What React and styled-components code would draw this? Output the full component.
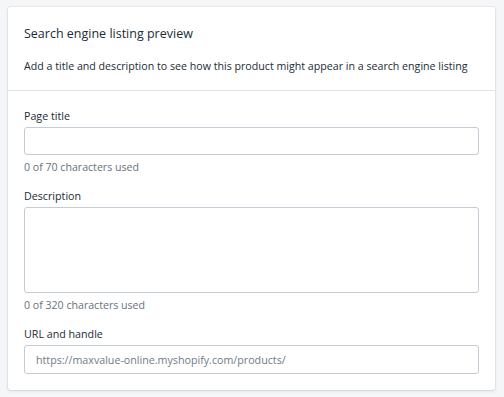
import React from 'react';
import styled, { createGlobalStyle } from 'styled-components';

const GlobalStyle = createGlobalStyle`
	* {
		box-sizing: border-box;
	}
	body {
		margin: 0;
		background-color: #f4f6f8;
		font-family: 'Open Sans', 'Noto Sans', sans-serif;
		color: #212b36;
	}
`;

const Page = styled.div`
	padding: 7px 9px 8px 8px;
`;

const Card = styled.div`
	background-color: #ffffff;
	border-radius: 3px;
	box-shadow: 0 0 0 1px rgba(63, 63, 68, 0.05), 0 1px 3px 0 rgba(63, 63, 68, 0.15);
`;

const Section = styled.div`
	padding: ${(props) => props.padding};
	& + & {
		border-top: 1px solid #dfe3e8;
	}
`;

const Title = styled.h2`
	margin: 0;
	font-size: 12.5px;
	font-weight: 400;
	line-height: 16px;
`;

const Subtitle = styled.p`
	margin: 16px 0 0;
	font-size: 10.65px;
	line-height: 16px;
	white-space: nowrap;
`;

const Field = styled.div`
	display: flex;
	flex-direction: column;
	& + & {
		margin-top: 13px;
	}
`;

const Label = styled.label`
	font-size: 10.7px;
	line-height: 16px;
	margin-bottom: 3px;
`;

const TextInput = styled.input`
	height: ${(props) => props.height || '28px'};
	width: 100%;
	border: 1px solid #c4cdd5;
	border-radius: 3px;
	padding: 0 11px;
	font-family: inherit;
	font-size: 10.7px;
	color: #212b36;
	background: #ffffff;
	outline: none;
	&::placeholder {
		color: #6f7b87;
	}
`;

const TextArea = styled.textarea`
	height: 86px;
	width: 100%;
	border: 1px solid #c4cdd5;
	border-radius: 3px;
	padding: 6px 11px;
	font-family: inherit;
	font-size: 10.7px;
	resize: none;
	outline: none;
	display: block;
`;

const Help = styled.div`
	margin-top: 4px;
	font-size: 10.6px;
	line-height: 16px;
	color: #66727e;
`;

const App = () => {
	return (
		<>
			<GlobalStyle />
			<Page>
				<Card>
					<Section padding='19px 16px 16px'>
						<Title>Search engine listing preview</Title>
						<Subtitle>
							Add a title and description to see how this product might appear in a search engine listing
						</Subtitle>
					</Section>
					<Section padding='17px 16px 16px'>
						<Field>
							<Label>Page title</Label>
							<TextInput />
							<Help>0 of 70 characters used</Help>
						</Field>
						<Field>
							<Label>Description</Label>
							<TextArea />
							<Help>0 of 320 characters used</Help>
						</Field>
						<Field>
							<Label>URL and handle</Label>
							<TextInput height='29px' placeholder='https://maxvalue-online.myshopify.com/products/' />
						</Field>
					</Section>
				</Card>
			</Page>
		</>
	);
};

export default App;
